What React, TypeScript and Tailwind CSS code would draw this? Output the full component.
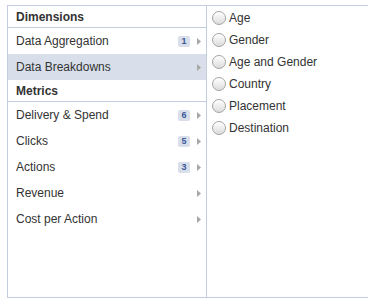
import React from "react"

type Row = { label: string; count?: number; active?: boolean }

const dimensions: Row[] = [
  { label: "Data Aggregation", count: 1 },
  { label: "Data Breakdowns", active: true },
]

const metrics: Row[] = [
  { label: "Delivery & Spend", count: 6 },
  { label: "Clicks", count: 5 },
  { label: "Actions", count: 3 },
  { label: "Revenue" },
  { label: "Cost per Action" },
]

const options = ["Age", "Gender", "Age and Gender", "Country", "Placement", "Destination"]

function Arrow() {
  return (
    <svg width="4" height="7" viewBox="0 0 4 7" className="shrink-0" aria-hidden="true">
      <path d="M0 0 L4 3.5 L0 7 Z" fill="#a7a7a7" />
    </svg>
  )
}

function Header({ children }: { children: React.ReactNode }) {
  return (
    <div className="flex h-[22px] items-center border-b border-[#c4cde0] pl-[8px] text-[12px] font-bold text-[#333]">
      {children}
    </div>
  )
}

function MenuRow({ row }: { row: Row }) {
  return (
    <div
      className={`flex h-[26px] items-center pl-[8px] pr-[5px] text-[12px] text-[#333] ${
        row.active ? "bg-[#d8dfea]" : ""
      }`}
    >
      <span className="flex-1">{row.label}</span>
      {row.count !== undefined && (
        <span className="mr-[7px] flex h-[11px] w-[12px] items-center justify-center rounded-[2px] bg-[#d8dfea] text-[9px] font-bold leading-none text-[#3b5998]">
          {row.count}
        </span>
      )}
      <Arrow />
    </div>
  )
}

function Radio() {
  return (
    <span className="h-[14px] w-[14px] shrink-0 rounded-full border border-[#a3a3a3] bg-gradient-to-b from-[#ffffff] to-[#dcdcdc] shadow-[inset_0_1px_1px_rgba(255,255,255,0.8)]" />
  )
}

export default function App() {
  return (
    <div className="bg-white pl-[7px] pt-[5px] font-['Liberation_Sans',Arial,sans-serif]">
      <div className="flex h-[293px] w-[361px] border-y border-l border-[#c4cde0]">
        <div className="w-[199px] shrink-0 border-r border-[#c4cde0]">
          <Header>Dimensions</Header>
          {dimensions.map((r) => (
            <MenuRow key={r.label} row={r} />
          ))}
          <Header>Metrics</Header>
          {metrics.map((r) => (
            <MenuRow key={r.label} row={r} />
          ))}
        </div>
        <div className="flex-1 pt-[1px]">
          {options.map((o) => (
            <label key={o} className="flex h-[22px] items-center gap-[3px] pl-[5px] text-[12px] text-[#333]">
              <Radio />
              <span>{o}</span>
            </label>
          ))}
        </div>
      </div>
    </div>
  )
}
